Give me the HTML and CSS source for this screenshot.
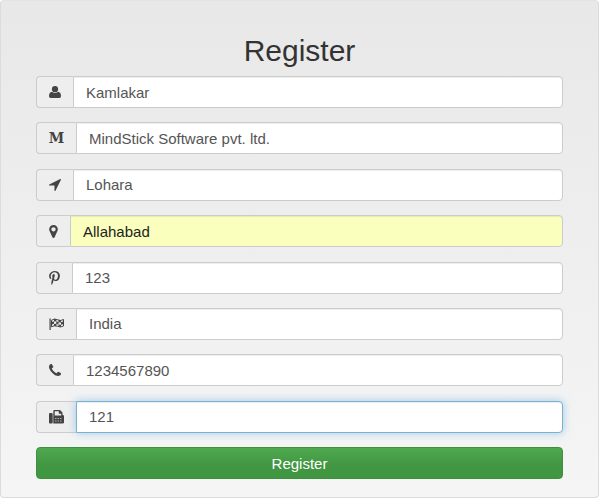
FILE: index.html
```
<!DOCTYPE html>
<html lang="en">
<head>
    <meta charset="UTF-8">
    <meta name="viewport" content="width=device-width, initial-scale=1.0">
    <title>Register</title>
    <link rel="stylesheet" href="styles.css">
</head>
<body>
    <main class="panel">
        <h1 class="title">Register</h1>
        <form class="register-form">
            <div class="input-group">
                <label class="addon" for="name" aria-label="Name">
                    <svg width="12" height="12" viewBox="0 0 12 12"><circle cx="6" cy="3.200" r="3.100"/><path d="M3 5.700Q6 8.300 9 5.700Q12 6 12 10.200Q12 12 10.300 12H1.700Q0 12 0 10.200Q0 6 3 5.700z"/></svg>
                </label>
                <input type="text" id="name" value="Kamlakar">
            </div>
            <div class="input-group">
                <label class="addon addon-letter" for="company" aria-label="Company">M</label>
                <input type="text" id="company" value="MindStick Software pvt. ltd.">
            </div>
            <div class="input-group">
                <label class="addon" for="address" aria-label="Address">
                    <svg width="12" height="12" viewBox="192 256 1408 1408"><path d="M1593 349l-640 1280q-17 35-57 35-5 0-15-2-22-5-35.500-22.500t-13.500-39.500v-576h-576q-22 0-39.500-13.500t-22.500-35.500 4-42 29-30l1280-640q13-7 29-7 27 0 45 19 15 14 18.500 34.500t-6.500 39.500z"/></svg>
                </label>
                <input type="text" id="address" value="Lohara">
            </div>
            <div class="input-group">
                <label class="addon" for="city" aria-label="City">
                    <svg width="9" height="13" viewBox="384 128 1024 1536"><path d="M1152 640q0-106-75-181t-181-75-181 75-75 181 75 181 181 75 181-75 75-181zm256 0q0 109-33 179l-364 774q-16 33-47.500 52t-67.500 19-67.500-19-46.500-52l-365-774q-33-70-33-179 0-212 150-362t362-150 362 150 150 362z"/></svg>
                </label>
                <input type="text" id="city" class="autofilled" value="Allahabad">
            </div>
            <div class="input-group">
                <label class="addon" for="pin" aria-label="Pin code">
                    <svg width="11" height="14" viewBox="256 0 1280 1664"><path d="M256 597q0-108 37.500-203.500t103.500-166.500 152-123 185-78 202-26q158 0 294 66.500t221 193.500 85 287q0 96-19 188t-60 177-100 149.500-145 103-189 38.500q-68 0-135-32t-96-88q-10 39-28 112.500t-23.500 95-20.500 71-26 71-32 62.500-46 77.500-62 86.500l-14 5-9-10q-15-157-15-188 0-92 21.500-206.500t66.500-287.500 52-203q-32-65-32-169 0-83 52-156t132-73q61 0 95 40.500t34 102.500q0 66-44 191t-44 187q0 63 45 104.500t109 41.500q55 0 102-25t78.500-68 56-95 38-110.500 20-111 6.500-99.500q0-173-109.500-269.500t-285.500-96.500q-200 0-334 129.500t-134 328.500q0 44 12.500 85t27 65 27 45.500 12.500 30.500q0 28-15 73t-37 45q-2 0-17-3-51-15-90.500-56t-61-94.500-32.500-108-11-106.500z"/></svg>
                </label>
                <input type="text" id="pin" value="123">
            </div>
            <div class="input-group">
                <label class="addon" for="country" aria-label="Country">
                    <!-- checkered flag -->
                    <svg width="15" height="12" viewBox="0 0 15 12">
                        <path d="M0.500 0.500h1.200v11.500h-1.200z"/>
                        <path d="M2.500 2.300Q5.500 0 8.500 1.700T14.500 1.500V8Q11.500 9.800 8.500 8.300T2.500 8.800z" fill="none" stroke="#444"/>
                        <path d="M5 1.200l2.300-.2v2.300l-2.300.3zM9.500 2l2.500.2v2.200l-2.500-.2zM2.800 4l2.200-.7v2.500l-2.200.8zM7.300 3.300l2.200.8v2.500l-2.200-.7zM12 4.300l2.300-.7v2.400l-2.300.7zM5 5.900l2.300-.1v2.300l-2.300.1zM9.500 6.500l2.500.3v2l-2.500-.2z"/>
                    </svg>
                </label>
                <input type="text" id="country" value="India">
            </div>
            <div class="input-group">
                <label class="addon" for="phone" aria-label="Phone">
                    <svg width="12" height="12" viewBox="192 128 1408 1408"><path d="M1600 1240q0 27-10 70.500t-21 68.500q-21 50-122 106-94 51-186 51-27 0-53-3.500t-57.500-12.500-47-14.500-55.500-20.500-49-18q-98-35-175-83-127-79-264-216t-216-264q-48-77-83-175-3-9-18-49t-20.500-55.500-14.500-47-12.500-57.500-3.500-53q0-92 51-186 56-101 106-122 25-11 68.500-21t70.500-10q14 0 21 3 18 6 53 76 11 19 30 54t35 63.500 31 53.500q3 4 17.500 25t21.500 35.500 7 28.500q0 20-28.500 50t-62 55-62 53-28.500 46q0 9 5 22.500t8.500 20.500 14 24 11.500 19q76 137 174 235t235 174q2 1 19 11.500t24 14 20.500 8.500 22.500 5q18 0 46-28.500t53-62 55-62 50-28.500q14 0 28.500 7t35.500 21.500 25 17.500q25 15 53.500 31t63.500 35 54 30q70 35 76 53 3 7 3 21z"/></svg>
                </label>
                <input type="text" id="phone" value="1234567890">
            </div>
            <div class="input-group">
                <label class="addon" for="fax" aria-label="Fax">
                    <svg width="15" height="14" viewBox="0 0 15 14">
                        <rect x="0" y="3" width="3.700" height="10.500" rx="1"/>
                        <path fill-rule="evenodd" d="M4.300 1q0-1 1-1h5.700l2.500 2.500v2.200q1.500.3 1.500 1.600v6q0 1.200-1.300 1.200H4.300zM5.700 1.300v4.200h6.500V3.700H9.800V1.300z"/>
                        <path d="M6 8.500h7M6 11h7" fill="none" stroke="#aaa" stroke-dasharray="1.500 1"/>
                    </svg>
                </label>
                <input type="text" id="fax" class="active" value="121">
            </div>
            <button type="button" class="register-button">Register</button>
        </form>
    </main>
</body>
</html>
```
FILE: styles.css
```
* {
    box-sizing: border-box;
}

body {
    margin: 0;
    background: #fff;
    font-family: "Liberation Sans", Arial, sans-serif;
    font-size: 15px;
    color: #555;
}

.panel {
    display: flex;
    flex-direction: column;
    min-height: calc(100vh - 2px);
    margin: 0 1px 2px 0;
    padding: 32px 35px 18px;
    border: 1px solid #dcdcdc;
    border-top-color: #e3e3e3;
    border-radius: 4px;
    background: linear-gradient(#e8e8e8, #f5f5f5);
}

.title {
    margin: 0 0 7px;
    font-size: 30px;
    font-weight: normal;
    line-height: 36px;
    text-align: center;
    color: #333;
}

/* rows share out the height of the panel */
.register-form {
    display: flex;
    flex: 1;
    flex-direction: column;
    justify-content: space-between;
    gap: 8px;
}

.input-group {
    display: flex;
    height: 32px;
}

.addon {
    display: flex;
    align-items: center;
    padding: 0 12px;
    border: 1px solid #ccc;
    border-right: 0;
    border-radius: 4px 0 0 4px;
    background: #eee;
}

.addon svg {
    display: block;
    fill: #444;
}

.addon-letter {
    justify-content: center;
    width: 40px;
    font-family: "DejaVu Serif", serif;
    font-weight: bold;
    font-size: 14px;
    color: #444;
}

input {
    flex: 1;
    min-width: 0;
    padding: 0 12px;
    border: 1px solid #ccc;
    border-radius: 0 4px 4px 0;
    background: #fff;
    font: inherit;
    color: #555;
    box-shadow: inset 0 1px 1px rgba(0, 0, 0, 0.075);
}

.autofilled {
    background: #faffbd;
    color: #222;
}

.active,
input:focus {
    border-color: #7ab0d0;
    outline: 0;
    box-shadow: inset 0 1px 1px rgba(0, 0, 0, 0.075), 0 0 8px rgba(102, 175, 233, 0.6);
}

.register-button {
    height: 32px;
    padding: 0 12px;
    border: 1px solid #3e8f3e;
    border-radius: 4px;
    background: linear-gradient(#4fa950, #419641 60%, #419641);
    font: inherit;
    color: #fff;
    cursor: pointer;
}

.register-button:hover {
    background: #419641;
}
```
